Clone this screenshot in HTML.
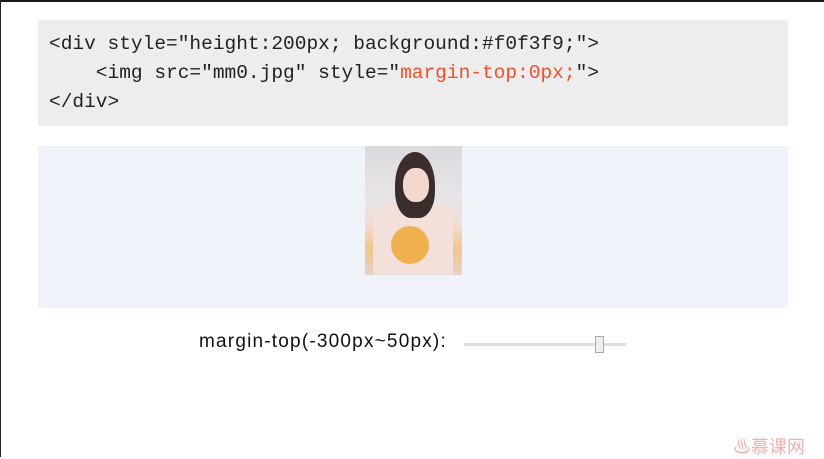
<!DOCTYPE html>
<html><head><style>
body{margin:0;width:824px;height:457px;background:#fff;position:relative;overflow:hidden;font-family:"Liberation Sans",sans-serif}
.tb{position:absolute;left:0;top:0;width:824px;height:2px;background:#1a1a1a}
.lb{position:absolute;left:0;top:0;width:1px;height:457px;background:#222}
.code{position:absolute;left:38px;top:20px;width:750px;height:106px;background:#eeedee}
.code pre{margin:0;position:absolute;left:11px;top:10px;font-family:"Liberation Mono",monospace;font-size:19.5px;line-height:29px;color:#222}
.r{color:#f0502d}
.demo{position:absolute;left:38px;top:146px;width:750px;height:162px;background:#f0f3f9}
.img{position:absolute;left:327px;top:0;width:97px;height:129px;background:linear-gradient(180deg,#dcdade 0%,#e8e4e8 40%,#f3ddd6 60%,#f1c68a 80%,#e7d0c8 100%)}
.hair{position:absolute;left:30px;top:6px;width:40px;height:66px;border-radius:50% 50% 40% 40%;background:#3a2d2c}
.face{position:absolute;left:38px;top:22px;width:26px;height:34px;border-radius:45%;background:#f2d8cd}
.body{position:absolute;left:8px;top:58px;width:80px;height:71px;border-radius:30% 30% 0 0;background:#f4e0da}
.sun{position:absolute;left:26px;top:80px;width:38px;height:38px;border-radius:50%;background:#f0b050}
.lab{position:absolute;left:199px;top:331px;font-size:19px;letter-spacing:1.2px;color:#111}
.track{position:absolute;left:464px;top:343px;width:162px;height:3px;background:#e2dcdc}
.thumb{position:absolute;left:595px;top:336px;width:9px;height:17px;background:#eee;border:1px solid #aaa;box-sizing:border-box}
.logo{position:absolute;left:733px;top:433px;font-family:"Noto Sans CJK SC",sans-serif;font-size:18px;color:#f0b0ae}
</style></head><body>
<div class="tb"></div><div class="lb"></div>
<div class="code"><pre>&lt;div style="height:200px; background:#f0f3f9;"&gt;
    &lt;img src="mm0.jpg" style="<span class="r">margin-top:0px;</span>"&gt;
&lt;/div&gt;</pre></div>
<div class="demo"><div class="img"><div class="body"></div><div class="sun"></div><div class="hair"></div><div class="face"></div></div></div>
<div class="lab">margin-top(-300px~50px):</div>
<div class="track"></div><div class="thumb"></div>
<div class="logo">♨慕课网</div>
</body></html>
